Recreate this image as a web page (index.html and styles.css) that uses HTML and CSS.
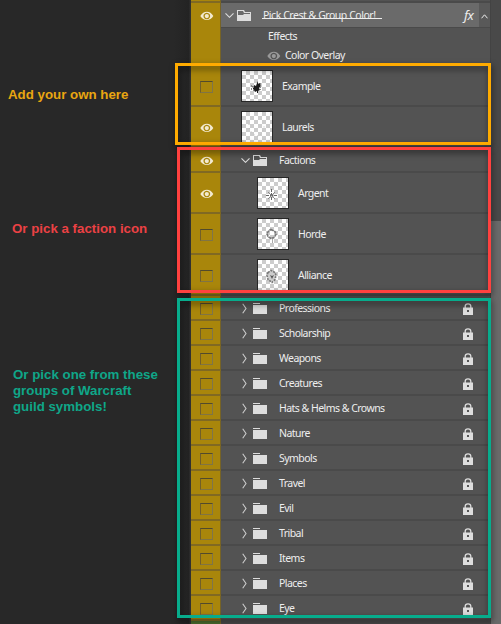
FILE: index.html
```html
<!DOCTYPE html>
<html lang="en">
<head>
<meta charset="utf-8">
<title>Layers</title>
<link rel="stylesheet" href="styles.css">
</head>
<body>
<svg class="defs" aria-hidden="true">
  <symbol id="eye" viewBox="0 0 14 10"><path fill-rule="evenodd" d="M0.3 5C3.4-.8 10.4-.8 13.3 5 10.4 10.4 3.4 10.4.3 5ZM6.8 1.7a3.3 3.3 0 1 0 .01 0Z"/><circle cx="6.8" cy="5.1" r="2.1"/></symbol>
  <symbol id="folder" viewBox="0 0 14 11"><path d="M0 0h7v1H0zM0 2h14v9H0z"/></symbol>
  <symbol id="open" viewBox="0 0 14 11"><path fill-rule="evenodd" d="M0 0h7l1 2h6v9H0zM1 1v4h5l1-1h6V3H7L6 1z"/></symbol>
  <symbol id="right" viewBox="0 0 5 11"><path d="M.7.7 4 5.5.7 10.3" fill="none" stroke="currentColor" stroke-width="1.1"/></symbol>
  <symbol id="down" viewBox="0 0 9 5"><path d="M.5.4 4.5 4.3 8.5.4" fill="none" stroke="currentColor" stroke-width="1.1"/></symbol>
  <symbol id="lock" viewBox="0 0 10 12"><path d="M2.2 5V3.3a2.8 2.5 0 0 1 5.6 0V5" fill="none" stroke="currentColor" stroke-width="1.3"/><path fill-rule="evenodd" d="M0 4.6h10V12H0zM4 7v2h2V7z"/></symbol>
</svg>
<div class="app">
  <aside class="notes">
    <p class="note note-own">Add your own here</p>
    <p class="note note-faction">Or pick a faction icon</p>
    <p class="note note-groups">Or pick one from these<br>groups of Warcraft<br>guild symbols!</p>
  </aside>
  <main class="layers">
    <div class="row edge"><div class="vis"></div><div class="body"></div></div>
    <div class="row small selected"><div class="vis"><svg class="eye"><use href="#eye"/></svg></div><div class="body"><svg class="down"><use href="#down"/></svg><svg class="folder"><use href="#open"/></svg><span class="name title">Pick Crest &amp; Group Color!</span><span class="fx">fx</span><span class="collapse"><svg class="up" viewBox="0 0 7 5"><path d="M.5 4.3 3.5.8 6.5 4.3" fill="none" stroke="currentColor"/></svg></span></div></div>
    <div class="row effects"><div class="vis"></div><div class="body"><div class="fxline">Effects</div><div class="fxline overlay"><svg class="eye dim"><use href="#eye"/></svg><span>Color Overlay</span></div></div></div>
    <div class="row layer"><div class="vis"><i class="box"></i></div><div class="body"><span class="thumb"><svg viewBox="0 0 30 30"><path d="M10 15l2 1v-2l2 1 1-3 1-2v3l2-1v2l1 1-2 2 1 2-2 1v2h-1v-2l-2 1-1-2-1 1v-3z" fill="#1c1c1c"/><path d="M9.500 14v6M11.500 15v6M18.500 12v7" stroke="#888" stroke-dasharray="2 1" fill="none"/></svg></span><span class="name">Example</span></div></div>
    <div class="row layer"><div class="vis"><svg class="eye"><use href="#eye"/></svg></div><div class="body"><span class="thumb"><svg viewBox="0 0 30 30"><path d="M7 12v4l3 5 4 3h3l3-3 2-5v-3" stroke="#bbb" stroke-dasharray="1 3" fill="none"/></svg></span><span class="name">Laurels</span></div></div>
    <div class="row small child"><div class="vis"><svg class="eye"><use href="#eye"/></svg></div><div class="body"><svg class="down"><use href="#down"/></svg><svg class="folder"><use href="#open"/></svg><span class="name">Factions</span></div></div>
    <div class="row layer child"><div class="vis"><svg class="eye"><use href="#eye"/></svg></div><div class="body"><span class="thumb"><svg viewBox="0 0 30 30"><path d="M13.500 11v12M8 17.500h11" stroke="#666" stroke-dasharray="3 1" fill="none"/><path d="M10 14l7 7M17 14l-7 7" stroke="#888" fill="none"/></svg></span><span class="name">Argent</span></div></div>
    <div class="row layer child"><div class="vis"><i class="box"></i></div><div class="body"><span class="thumb"><svg viewBox="0 0 30 30"><path d="M13 10.500l4 2 1 3-2 3-3 1-3-2-1-3 2-3z" stroke="#777" stroke-width="1.600" stroke-dasharray="3 .6" fill="none"/><path d="M14.500 20v4" stroke="#aaa" fill="none"/></svg></span><span class="name">Horde</span></div></div>
    <div class="row layer child"><div class="vis"><i class="box"></i></div><div class="body"><span class="thumb"><svg viewBox="0 0 30 30"><path d="M10 12.500l3-2 4 2 1 3-1 4-3 3-4-3-1-4z" stroke="#777" stroke-width="1.600" stroke-dasharray="2 1" fill="#ccc"/><path d="M12 15l2 1 2-1-2 4z" fill="#555"/></svg></span><span class="name">Alliance</span></div></div>
    <div class="groups" id="groups"></div>
    <div class="row last"><div class="vis"></div><div class="body"></div></div>
    <div class="frame frame-own"></div><div class="frame frame-faction"></div><div class="frame frame-groups"></div>
  </main>
  <div class="scroll"><div class="thumbbar"></div></div>
</div>
<script src="script.js"></script>
</body>
</html>
```
FILE: styles.css
```css
* { box-sizing: border-box; }
body { margin: 0; background: #282828; overflow: hidden; }
.defs { position: absolute; width: 0; height: 0; }
svg { display: block; flex: none; fill: currentColor; }
.app { position: relative; display: grid; grid-template-columns: 191px 299px 11px; height: 624px; overflow: hidden; }
.notes { padding-top: 87px; background: linear-gradient(90deg, #282828 174px, #232323 189px, #303030 190px); }
.note { margin: 0; font: bold 13.3px/16px "Liberation Sans", sans-serif; white-space: nowrap; }
.note-own { padding-left: 8px; color: #e9a611; }
.note-faction { padding: 118px 0 0 12px; color: #eb4144; }
.note-groups { padding: 130px 0 0 13px; color: #0fa688; }
.layers { color: #eee; font: 10.5px/14px "Noto Sans", sans-serif; letter-spacing: -0.55px; word-spacing: 0.1px; }
.row { display: flex; }
.vis { width: 30px; flex: none; background: #a9860b; border-bottom: 2px solid #806923; border-right: 1px solid #766326; padding-left: 9px; }
.body { display: flex; flex: 1; background: #535353; border-bottom: 2px solid #4a4a4a; padding-left: 20px; }
.edge { height: 3px; }
.small { height: 25px; }
.layer { height: 41px; }
.effects { height: 38px; }
.effects .body { display: block; padding: 0 0 0 47px; border: 0; }
.effects .vis { border-bottom: 0; }
.selected .body { background: #6a6a6a; padding-left: 4px; border-bottom-width: 1px; }
.selected .vis { border-bottom: 0; }
.layer.child .body { padding-left: 36px; }
.eye { width: 14px; height: 10px; color: #f3ead0; margin-top: 8px; }
.layer .eye { margin-top: 16px; }
.down { width: 9px; height: 5px; margin: 10px 3px 0 0; color: #ddd; }
.folder { width: 14px; height: 11px; margin-top: 7px; color: #ddd; }
.name { margin: 5px 0 0 12px; white-space: nowrap; }
.layer .name { margin: 13px 0 0 9px; }
.name.title { flex: none; height: 11px; margin-left: 11px; padding-left: 1px; line-height: 14px; letter-spacing: -0.48px; border-bottom: 1px solid #eee; width: 120px; }
.fx { margin: 4px 0 0 82px; width: 15px; font: italic 13px/16px "Noto Sans", sans-serif; }
.collapse { background: #595959; width: 11px; margin-left: auto; padding: 11px 0 0 2px; }
.up { width: 7px; height: 5px; }
.fxline { height: 19px; line-height: 16px; }
.overlay { display: flex; margin-left: -1px; }
.overlay .eye { margin: 4px 4px 0 0; }
.eye.dim { color: #999; }
.box { display: block; width: 13px; height: 12px; margin-top: 7px; border: 1px solid; border-color: #514a2c #7f754b #807445 #715f29; }
.layer .box { margin-top: 15px; }
.thumb { width: 32px; height: 32px; margin-top: 4px; border: 1px solid #272727; background: conic-gradient(#ccc 25%, #fff 0 50%, #ccc 0 75%, #fff 0) 0 0 / 8px 8px; }
.thumb svg { width: 30px; height: 30px; }
.right { width: 5px; height: 11px; margin: 7px 6px 0 1px; color: #ccc; }
.lock { width: 10px; height: 12px; margin: 7px 17px 0 auto; color: #ddd; }
.last { height: 3px; }
.last .vis { background: #496b2e; border-bottom: 0; }
.last .body { border: 0; background: #484848; }
.scroll { background: #494949; border-left: 1px solid #434343; padding-top: 221px; }
.thumbbar { height: 403px; background: #6a6a6a; }
.frame { position: absolute; border: 3px solid; filter: drop-shadow(1px 3px 3px rgba(0,0,0,.6)); left: 177px; width: 314px; }
.frame-own { left: 175px; width: 316px; top: 63px; height: 82px; border-color: #ffab00; }
.frame-faction { top: 147px; height: 146px; border-color: #ff413f; }
.frame-groups { top: 298px; height: 320px; border-color: #07ac8c; }
```
FILE: script.js
```js
const groups = ["Professions", "Scholarship", "Weapons", "Creatures", "Hats & Helms & Crowns", "Nature", "Symbols", "Travel", "Evil", "Tribal", "Items", "Places", "Eye"];
const list = document.getElementById("groups");
for (const label of groups) {
  const row = document.createElement("div");
  row.className = "row small";
  row.innerHTML = '<div class="vis"><i class="box"></i></div><div class="body"><svg class="right"><use href="#right"/></svg><svg class="folder"><use href="#folder"/></svg><span class="name"></span><svg class="lock"><use href="#lock"/></svg></div>';
  row.querySelector(".name").textContent = label;
  list.append(row);
}
```
